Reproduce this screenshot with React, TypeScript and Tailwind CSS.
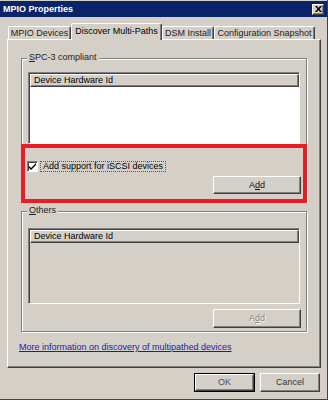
import { ReactNode } from "react";

const FONT = "font-['Liberation_Sans',Arial,sans-serif]";

// classic win2k raised / sunken edges
const RAISED =
  "border border-t-white border-l-white border-r-[#404040] border-b-[#404040] shadow-[inset_-1px_-1px_0_#808080]";
const SUNKEN =
  "border border-t-[#808080] border-l-[#808080] border-r-white border-b-white shadow-[inset_1px_1px_0_#404040]";

function Button({
  children,
  w,
  h,
  disabled,
  isDefault,
}: {
  children: ReactNode;
  w: string;
  h: string;
  disabled?: boolean;
  isDefault?: boolean;
}) {
  const inner = (
    <div
      className={`${RAISED} flex-1 flex items-center justify-center bg-[#d4d0c8] text-[9px] leading-[11px] ${
        disabled ? "text-[#808080] [text-shadow:1px_1px_0_#fff]" : "text-[#111]"
      }`}
    >
      {children}
    </div>
  );
  return (
    <div
      className={`${w} ${h} flex ${isDefault ? "border border-black" : ""}`}
    >
      {inner}
    </div>
  );
}

function HardwareList({ height, disabled }: { height: string; disabled?: boolean }) {
  return (
    <div
      className={`${SUNKEN} ${height} flex flex-col ${
        disabled ? "bg-[#d4d0c8]" : "bg-white"
      }`}
    >
      <div className="pl-[1px] pt-[1px]">
        <div
          className={`${RAISED} h-[13px] pl-[3px] flex items-center bg-[#d4d0c8] text-[9px] leading-[11px]`}
        >
          Device Hardware Id
        </div>
      </div>
    </div>
  );
}

function GroupBox({
  label,
  children,
  className,
}: {
  label: ReactNode;
  children: ReactNode;
  className?: string;
}) {
  return (
    <div
      className={`relative border border-[#808080] shadow-[inset_1px_1px_0_#fff,1px_1px_0_#fff] ${className ?? ""}`}
    >
      {/* caption sits over the frame line */}
      <span className="absolute left-[5px] top-[-7px] px-[2px] bg-[#d4d0c8] text-[9px] leading-[11px] text-[#222]">
        {label}
      </span>
      {children}
    </div>
  );
}

const TABS = [
  { label: "MPIO Devices", w: "w-[63px]" },
  { label: "Discover Multi-Paths", w: "w-[91px]", active: true },
  { label: "DSM Install", w: "w-[52px]" },
  { label: "Configuration Snapshot", w: "w-[101px]" },
];

export default function App() {
  return (
    <div
      className={`${FONT} relative w-[328px] h-[400px] bg-[#d4d0c8] text-black flex flex-col pt-[1px] border-r border-b border-[#404040]`}
    >
      {/* title bar */}
      <div className="h-[16px] flex items-center justify-between pl-[3px] pr-[3px] bg-[#0a246a]">
        <span className="text-white font-bold text-[9px] leading-[11px]">
          MPIO Properties
        </span>
        <div className={`${RAISED} w-[12px] h-[11px] bg-[#d4d0c8] flex items-center justify-center`}>
          <svg width="7" height="6" viewBox="0 0 7 6">
            <path d="M0 0h2l1.5 2L5 0h2L4.5 3 7 6H5L3.5 4 2 6H0l2.5-3z" fill="#000" />
          </svg>
        </div>
      </div>

      {/* tabs */}
      <div className="mt-[6px] ml-[7px] mr-[6px] flex flex-col">
        <div className="h-[16px] pl-[1px] flex items-end">
          {TABS.map((t) =>
            t.active ? (
              <div
                key={t.label}
                className={`${t.w} relative z-10 h-[17px] -mb-[1px] bg-[#d4d0c8] border-t border-l border-white border-r border-r-[#404040] rounded-t-[2px] shadow-[inset_-1px_0_0_#808080] flex items-start justify-center pt-[2px] text-[9px] leading-[11px]`}
              >
                {t.label}
              </div>
            ) : (
              <div
                key={t.label}
                className={`${t.w} h-[13px] bg-[#d4d0c8] border-t border-l border-white border-r border-r-[#404040] rounded-t-[2px] shadow-[inset_-1px_0_0_#808080] flex items-center justify-center text-[9px] leading-[11px] text-[#222]`}
              >
                {t.label}
              </div>
            )
          )}
        </div>

        {/* tab page */}
        <div className="h-[329px] border border-t-white border-l-white border-r-[#404040] border-b-[#404040] shadow-[inset_-1px_-1px_0_#808080] px-[13px] pt-[18px] flex flex-col">
          <GroupBox
            label={
              <>
                <u>S</u>PC-3 compliant
              </>
            }
            className="px-[6px] pt-[13px] pb-[7px]"
          >
            <HardwareList height="h-[72px]" />
            <div className="mt-[16px] h-[13px] flex items-center -ml-[1px]">
              <div className={`${SUNKEN} w-[11px] h-[11px] bg-white flex items-center justify-center`}>
                <svg width="7" height="7" viewBox="0 0 7 7">
                  <path d="M0 3l2 2 5-5v2L2 7 0 5z" fill="#000" />
                </svg>
              </div>
              <span className="ml-[2px] px-[2px] border border-dotted border-[#555] text-[9px] leading-[9px]">
                Add support for iSCSI devices
              </span>
            </div>
            <div className="mt-[3px] flex justify-end -mr-[1px]">
              <Button w="w-[88px]" h="h-[18px]">
                A<u>d</u>d
              </Button>
            </div>
          </GroupBox>

          <GroupBox
            label={
              <>
                <u>O</u>thers
              </>
            }
            className="mt-[9px] px-[6px] pt-[16px] pb-[3px]"
          >
            <HardwareList height="h-[76px]" disabled />
            <div className="mt-[5px] flex justify-end -mr-[1px]">
              <Button w="w-[88px]" h="h-[19px]" disabled>
                A<u>d</u>d
              </Button>
            </div>
          </GroupBox>

          <a className="mt-[10px] -ml-[2px] text-[9px] leading-[11px] text-[#1c1ca8] underline">
            More information on discovery of multipathed devices
          </a>
        </div>

        {/* dialog buttons */}
        <div className="mt-[5px] pr-[1px] flex justify-end gap-[5px]">
          <Button w="w-[61px]" h="h-[19px]" isDefault>
            <span className="text-[#555]">OK</span>
          </Button>
          <Button w="w-[60px]" h="h-[19px]">
            <span className="text-[#333]">Cancel</span>
          </Button>
        </div>
      </div>

      {/* red highlight drawn on top of the screenshot */}
      <div className="absolute left-[21px] top-[144px] w-[286px] h-[59px] border-[4px] border-[#ec1c24] pointer-events-none" />
    </div>
  );
}
